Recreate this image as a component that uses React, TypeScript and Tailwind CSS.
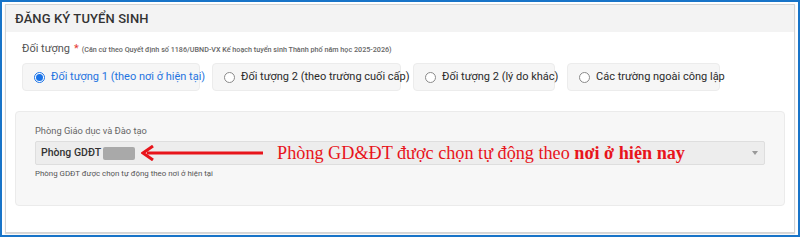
import React from "react";

const options = [
  { label: "Đối tượng 1 (theo nơi ở hiện tại)", checked: true, w: "w-[178px]" },
  { label: "Đối tượng 2 (theo trường cuối cấp)", checked: false, w: "w-[189px]" },
  { label: "Đối tượng 2 (lý do khác)", checked: false, w: "w-[142px]" },
  { label: "Các trường ngoài công lập", checked: false, w: "w-[153px]" },
];

export default function App() {
  return (
    <div
      className="w-[800px] h-[237px] border-2 border-[#1874c8] bg-white pt-[2px] px-[3px] pb-[2px]"
      style={{ fontFamily: "Roboto, 'Noto Sans', sans-serif" }}
    >
      <div className="h-full border border-[#d4d4d4] shadow-[0_1px_1px_rgba(0,0,0,0.15)] bg-white flex flex-col">
        <div className="h-[27px] bg-[#f3f3f3] flex items-center pl-[9px] shrink-0">
          <span className="text-[13px] font-medium text-[#333] tracking-[0.1px]">ĐĂNG KÝ TUYỂN SINH</span>
        </div>
        <div className="pl-[16px] pt-[10px]">
          <div className="flex items-baseline h-[13px] leading-[13px]">
            <span className="text-[11px] text-[#555]">Đối tượng</span>
            <span className="text-[11px] text-[#e53935] ml-[4px]">*</span>
            <span className="text-[7.2px] font-medium text-[#666] ml-[3px] whitespace-nowrap">
              (Căn cứ theo Quyết định số 1186/UBND-VX Kế hoạch tuyển sinh Thành phố năm học 2025-2026)
            </span>
          </div>
          <div className="flex gap-[12px] mt-[8px]">
            {options.map((o) => (
              <div
                key={o.label}
                className={`${o.w} h-[28px] rounded-[4px] bg-[#f6f6f6] border border-[#ececec] flex items-center pl-[11px]`}
              >
                {o.checked ? (
                  <span className="block shrink-0 w-[11px] h-[11px] rounded-full border border-[#1a73e8] flex items-center justify-center bg-white">
                    <span className="block w-[7px] h-[7px] rounded-full bg-[#1a73e8]" />
                  </span>
                ) : (
                  <span className="block shrink-0 w-[11px] h-[11px] rounded-full border border-[#8a8a8a] bg-white" />
                )}
                <span
                  className={`ml-[6px] text-[11px] whitespace-nowrap ${
                    o.checked ? "text-[#1f74e0]" : "text-[#2a2a2a]"
                  }`}
                >
                  {o.label}
                </span>
              </div>
            ))}
          </div>
        </div>
        <div className="mx-[9px] mt-[20px] h-[95px] bg-[#f7f7f7] border border-[#ebebeb] rounded-[4px] pl-[19px] pr-[19px] pt-[12px]">
          <div className="text-[9.3px] text-[#666] leading-[14px]">Phòng Giáo dục và Đào tạo</div>
          <div className="mt-[3px] h-[24px] bg-[#ededed] border border-[#dedede] rounded-[2px] flex items-center pl-[5px] pr-[6px]">
            <span className="text-[10.5px] font-medium text-[#333] whitespace-nowrap">Phòng GDĐT</span>
            <span className="block shrink-0 ml-[2px] w-[32px] h-[13px] bg-[#a9a9a9] rounded-[2px]" />
            <svg width="124" height="16" viewBox="0 0 124 16" className="ml-[6px] shrink-0">
              <line x1="6" y1="8" x2="122" y2="8" stroke="#e8141b" strokeWidth="3" />
              <path d="M12 1 L2 8 L12 15" fill="none" stroke="#e8141b" strokeWidth="3" strokeLinejoin="miter" />
            </svg>
            <span
              className="ml-[12px] text-[18.2px] text-[#e8141b] whitespace-nowrap leading-none"
              style={{ fontFamily: "'Liberation Serif', 'Times New Roman', serif" }}
            >
              Phòng GD&amp;ĐT được chọn tự động theo <b>nơi ở hiện nay</b>
            </span>
            <svg width="6" height="4" viewBox="0 0 6 4" className="ml-auto shrink-0">
              <path d="M0 0 L6 0 L3 4 Z" fill="#999" />
            </svg>
          </div>
          <div className="mt-[4px] text-[7.9px] text-[#555] leading-[10px]">
            Phòng GDĐT được chọn tự động theo nơi ở hiện tại
          </div>
        </div>
      </div>
    </div>
  );
}
